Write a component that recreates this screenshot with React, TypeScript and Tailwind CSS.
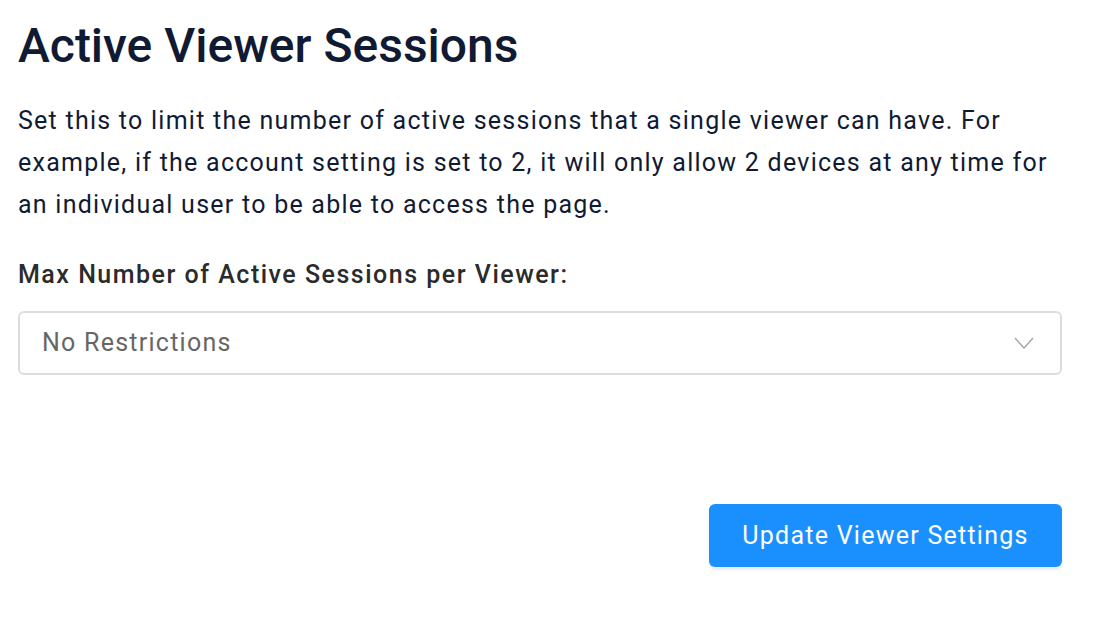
export default function App() {
  return (
    <div className="min-h-screen bg-white font-['Roboto',sans-serif]">
      <div className="w-[1094px] px-[18px] pt-[18px]">
        <div className="w-[1044px]">
          <h1 className="text-[48px] font-medium leading-[56px] text-[#111a33]">Active Viewer Sessions</h1>
          <p className="mt-[26px] text-[25px] leading-[42px] tracking-[0.05em] text-[#111a33]">
            Set this to limit the number of active sessions that a single viewer can have. For example, if the account
            setting is set to 2, it will only allow 2 devices at any time for an individual user to be able to access
            the page.
          </p>
          <label className="mt-[34px] block text-[25px] font-medium leading-[30px] tracking-[0.06em] text-[#2b2b2b]">
            Max Number of Active Sessions per Viewer:
          </label>
          <div className="mt-[21px] flex h-[64px] items-center justify-between rounded-[6px] border-2 border-[#dddddd] pl-[22px] pr-[26px]">
            <span className="text-[25px] tracking-[0.05em] text-[#666666]">No Restrictions</span>
            <svg width="20" height="12" viewBox="0 0 20 12" fill="none" stroke="#aaaaaa" strokeWidth="1.6">
              <path d="M1 1l9 10 9-10" />
            </svg>
          </div>
          <div className="mt-[129px] flex justify-end">
            <button className="h-[63px] w-[353px] rounded-[6px] bg-[#1a90ff] text-[25px] tracking-[0.05em] text-white shadow-[0_3px_3px_rgba(0,0,0,0.08)]">
              Update Viewer Settings
            </button>
          </div>
        </div>
      </div>
    </div>
  )
}
